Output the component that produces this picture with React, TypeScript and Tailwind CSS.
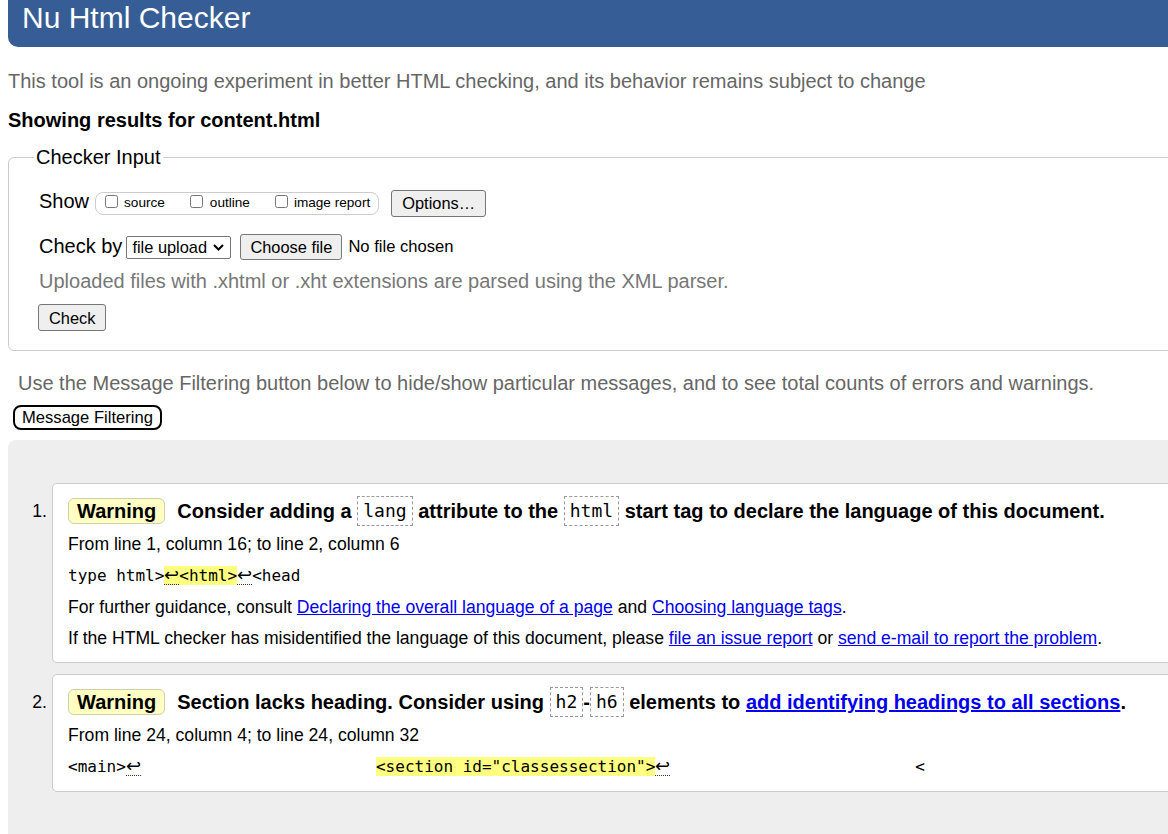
import React from "react";

const mono = "font-['DejaVu_Sans_Mono','Liberation_Mono',monospace]";

function Code({ children }: { children: React.ReactNode }) {
  return (
    <code
      className={`inline-block align-top h-[30px] leading-[28px] px-[5px] border border-dashed border-[#999] text-[18px] font-normal ${mono}`}
    >
      {children}
    </code>
  );
}

function Badge() {
  return (
    <span className="inline-block align-top mt-[2px] h-[26px] leading-[24px] px-[8px] bg-[#ffffc4] border border-[#cfcfa8] rounded-[6px] font-bold">
      Warning
    </span>
  );
}

function Lf({ hl }: { hl?: boolean }) {
  return (
    <span
      className={`inline-block w-[15px] text-center leading-[18px] font-['DejaVu_Sans',sans-serif] text-[18px] font-light border-b border-dotted border-[#333] ${
        hl ? "bg-[#ffff80]" : ""
      }`}
    >
      ↩
    </span>
  );
}

function A({ children, bold }: { children: React.ReactNode; bold?: boolean }) {
  return (
    <a href="#" className={`text-[#0000ee] underline ${bold ? "font-bold" : ""}`}>
      {children}
    </a>
  );
}

function Message({
  n,
  title,
  from,
  extract,
  extra,
  mt,
}: {
  n: number;
  title: React.ReactNode;
  from: string;
  extract: React.ReactNode;
  extra?: React.ReactNode;
  mt: string;
}) {
  return (
    <div className={`flex ${mt}`}>
      <div className="w-[44px] shrink-0 text-right pr-[5px] pt-[13.5px] leading-[30px] text-[17.6px]">{n}.</div>
      <div className="flex-1 bg-white border border-[#ccc] rounded-[5px] pl-[15px] pt-[12.5px] pb-[14px]">
        <div className="leading-[30px] text-[20px] font-bold whitespace-nowrap">
          <Badge />
          <span className="ml-[12px]">{title}</span>
        </div>
        <div className="mt-[7.5px] leading-[20px] text-[17.6px]">{from}</div>
        <div className={`mt-[12px] h-[20px] leading-[20px] text-[16px] whitespace-pre ${mono}`}>{extract}</div>
        {extra}
      </div>
    </div>
  );
}

export default function App() {
  const sp = " ".repeat(24);
  const sp2 = " ".repeat(25);
  return (
    <div className="w-[1168px] h-[834px] overflow-hidden bg-white text-black font-['Liberation_Sans',Arial,sans-serif]">
      <div className="w-[1230px] pl-2">
        <h1 className="h-[47px] bg-[#365d95] rounded-bl-[10px] text-white text-[30px] leading-[36px] pl-[14px]">
          Nu Html Checker
        </h1>
        <p className="mt-[23px] text-[20px] leading-[23px] text-[#666]">
          This tool is an ongoing experiment in better HTML checking, and its behavior remains subject to change
        </p>
        <p className="mt-[16px] text-[20px] leading-[23px] font-bold">Showing results for content.html</p>

        <fieldset className="mt-[14px] border border-[#ccc] rounded-[6px] pl-[25px] pt-[20px] pb-[19px]">
          <legend className="px-[2px] text-[20px] leading-[23px]">Checker Input</legend>
          <div className="ml-[5px] h-[28px] flex items-center">
            <span className="mb-[4px] text-[20px] leading-[23px]">Show</span>
            <div className="ml-[6px] h-[23px] border border-[#ccc] rounded-[8px] flex items-center pl-[9px] pr-[8px] text-[13.6px]">
              <input type="checkbox" className="w-[13px] h-[13px] -mt-[4px]" />
              <span className="ml-[6px]">source</span>
              <input type="checkbox" className="ml-[25px] w-[13px] h-[13px] -mt-[4px]" />
              <span className="ml-[7px]">outline</span>
              <input type="checkbox" className="ml-[25px] w-[13px] h-[13px] -mt-[4px]" />
              <span className="ml-[6px]">image report</span>
            </div>
            <button className="ml-[12px] h-[27px] px-[10px] bg-[#efefef] border border-[#767676] rounded-[3px] text-[16.4px] leading-[20px]">
              Options…
            </button>
          </div>
          <div className="ml-[5px] mt-[17px] h-[26px] flex items-center">
            <span className="mb-[2px] text-[20px] leading-[23px]">Check by</span>
            <div className="ml-[4px] h-[23px] w-[105px] border border-[#767676] rounded-[2px] flex items-center pl-[5px] text-[16.4px]">
              <span>file upload</span>
              <svg className="ml-[6px]" width="11" height="7" viewBox="0 0 11 7">
                <path d="M1 1 L5.5 5.5 L10 1" fill="none" stroke="#000" strokeWidth="2" />
              </svg>
            </div>
            <button className="ml-[9px] h-[26px] px-[9px] bg-[#efefef] border border-[#767676] rounded-[3px] text-[16.4px] leading-[20px]">
              Choose file
            </button>
            <span className="ml-[6px] text-[16.6px]">No file chosen</span>
          </div>
          <p className="ml-[5px] mt-[10px] text-[20px] leading-[23px] text-[#777]">
            Uploaded files with .xhtml or .xht extensions are parsed using the XML parser.
          </p>
          <button className="ml-[4px] mt-[11px] h-[27px] px-[10px] bg-[#efefef] border border-[#767676] rounded-[3px] text-[16.4px] leading-[20px]">
            Check
          </button>
        </fieldset>

        <p className="mt-[21px] ml-[10px] text-[20px] leading-[23px] text-[#666]">
          Use the Message Filtering button below to hide/show particular messages, and to see total counts of errors and warnings.
        </p>
        <button className="mt-[9.5px] ml-[5px] h-[25px] px-[7px] border-2 border-black rounded-[8px] bg-white text-[16.6px] leading-[19px]">
          Message Filtering
        </button>

        <div className="mt-[10px] bg-[#eeeeee] rounded-tl-[8px] pt-[43px] pb-[60px]">
          <Message
            n={1}
            mt="mt-0"
            title={
              <>
                Consider adding a <Code>lang</Code> attribute to the <Code>html</Code> start tag to declare the language of this document.
              </>
            }
            from="From line 1, column 16; to line 2, column 6"
            extract={
              <>
                {"type html>"}
                <span className="bg-[#ffff80]">
                  <Lf hl />
                  {"<html>"}
                </span>
                <Lf />
                {"<head"}
              </>
            }
            extra={
              <>
                <div className="mt-[11px] leading-[20px] text-[17.6px]">
                  For further guidance, consult <A>Declaring the overall language of a page</A> and{" "}
                  <A>Choosing language tags</A>.
                </div>
                <div className="mt-[11px] leading-[20px] text-[17.6px]">
                  If the HTML checker has misidentified the language of this document, please <A>file an issue report</A> or{" "}
                  <A>send e-mail to report the problem</A>.
                </div>
              </>
            }
          />
          <Message
            n={2}
            mt="mt-[11px]"
            title={
              <>
                Section lacks heading. Consider using <Code>h2</Code>-<Code>h6</Code> elements to{" "}
                <A bold>add identifying headings to all sections</A>.
              </>
            }
            from="From line 24, column 4; to line 24, column 32"
            extract={
              <>
                {"<main>"}
                <Lf />
                {sp}
                <span className="ml-[4px] bg-[#ffff80]">{'<section id="classessection">'}</span>
                <Lf />
                {sp2}
                <span className="ml-[4px]">{"<"}</span>
              </>
            }
          />
        </div>
      </div>
    </div>
  );
}
